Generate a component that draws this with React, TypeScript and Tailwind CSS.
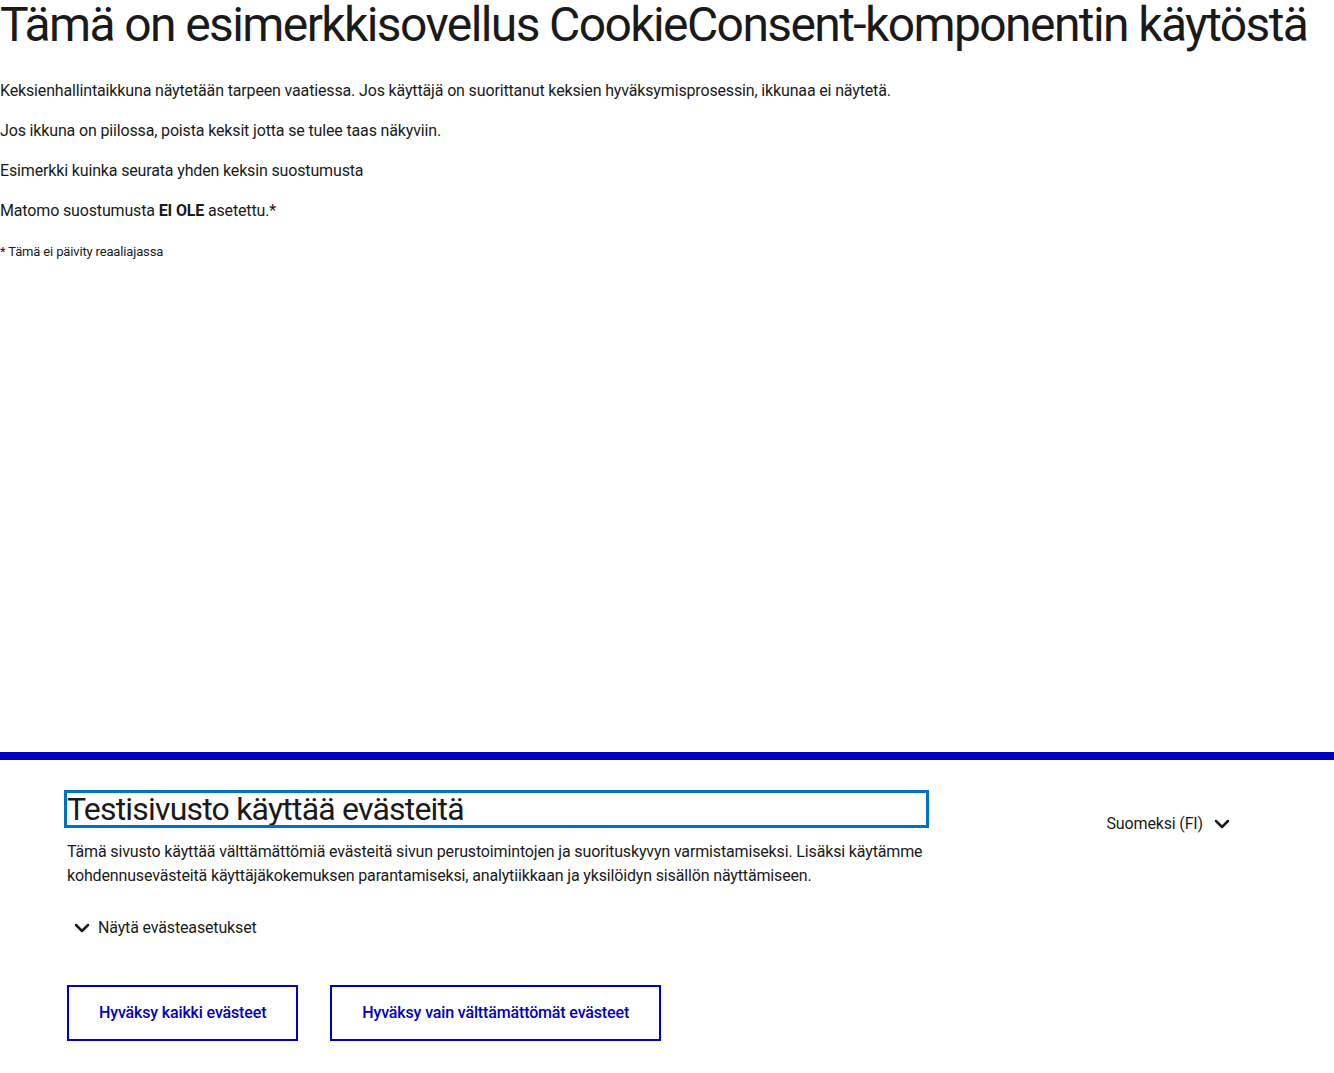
import { ChevronDown } from 'lucide-react';

const font = { fontFamily: 'Roboto, "Liberation Sans", sans-serif' };

function CookieBanner() {
  return (
    <div className="shrink-0 border-t-8 border-[#0000bf] bg-white">
      <div className="flex px-[67px] pt-[33px] pb-8">
        <div className="w-[859px]">
          <h2 className="text-[32px] leading-[32px] font-normal tracking-[-0.8px] text-[#1a1a1a] outline-[3px] outline-solid outline-[#0072c6]">
            Testisivusto käyttää evästeitä
          </h2>
          <p className="mt-[15px] text-base leading-6 text-[#1a1a1a]">
            Tämä sivusto käyttää välttämättömiä evästeitä sivun perustoimintojen ja suorituskyvyn varmistamiseksi.
            Lisäksi käytämme kohdennusevästeitä käyttäjäkokemuksen parantamiseksi, analytiikkaan ja yksilöidyn
            sisällön näyttämiseen.
          </p>
          <button className="mt-[28px] flex items-center gap-1 pl-[3px] text-base leading-6 text-[#1a1a1a]">
            <ChevronDown size={24} strokeWidth={2.5} />
            Näytä evästeasetukset
          </button>
          <div className="mt-[45px] flex gap-8">
            <button className="h-14 border-2 border-[#0000bf] px-[30px] text-base font-medium text-[#0000bf]">
              Hyväksy kaikki evästeet
            </button>
            <button className="h-14 border-2 border-[#0000bf] px-[30px] text-base font-medium text-[#0000bf]">
              Hyväksy vain välttämättömät evästeet
            </button>
          </div>
        </div>
        <div className="ml-auto mr-[33px] mt-[19px] self-start">
          <button className="flex items-center gap-[7px] text-base leading-6 text-[#1a1a1a]">
            Suomeksi (FI)
            <ChevronDown size={24} strokeWidth={2.5} />
          </button>
        </div>
      </div>
    </div>
  );
}

export default function App() {
  return (
    <div className="flex h-screen flex-col bg-white text-[#1a1a1a] tracking-[-0.15px]" style={font}>
      <main className="flex-1">
        <h1 className="whitespace-nowrap text-[48px] leading-[50px] font-normal tracking-[-1.6px]">
          Tämä on esimerkkisovellus CookieConsent-komponentin käytöstä
        </h1>
        <p className="mt-[29px] text-base leading-6">
          Keksienhallintaikkuna näytetään tarpeen vaatiessa. Jos käyttäjä on suorittanut keksien hyväksymisprosessin,
          ikkunaa ei näytetä.
        </p>
        <p className="mt-4 text-base leading-6">Jos ikkuna on piilossa, poista keksit jotta se tulee taas näkyviin.</p>
        <p className="mt-4 text-base leading-6">Esimerkki kuinka seurata yhden keksin suostumusta</p>
        <p className="mt-4 text-base leading-6">
          Matomo suostumusta <strong className="font-bold">EI OLE</strong> asetettu.*
        </p>
        <p className="mt-[19px] text-[13px] leading-5">* Tämä ei päivity reaaliajassa</p>
      </main>
      <CookieBanner />
    </div>
  );
}
